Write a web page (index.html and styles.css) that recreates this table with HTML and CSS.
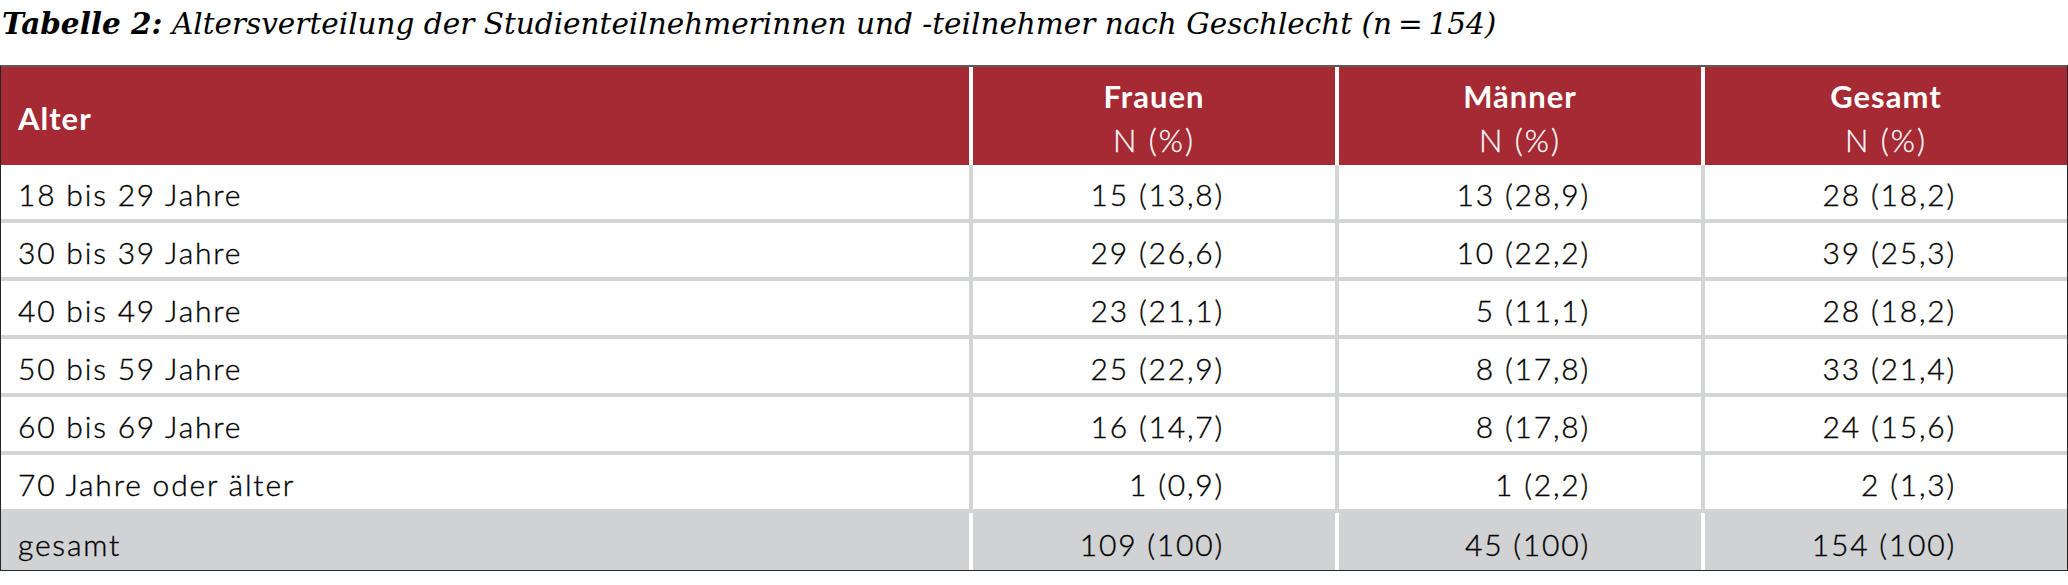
FILE: index.html
```html
<!DOCTYPE html>
<html lang="de">
<head>
<meta charset="utf-8">
<title>Tabelle 2</title>
<link rel="stylesheet" href="styles.css">
</head>
<body>
<h1 class="caption"><strong class="caption-label">Tabelle 2:</strong> <em class="caption-text">Altersverteilung der Studienteilnehmerinnen und -teilnehmer nach Geschlecht (n&#8201;=&#8201;154)</em></h1>
<table class="data">
  <colgroup>
    <col class="col-age">
    <col class="col-num">
    <col class="col-num">
    <col class="col-num">
  </colgroup>
  <thead>
    <tr>
      <th class="head-age">Alter</th>
      <th class="head-num">Frauen<br><span class="unit">N (%)</span></th>
      <th class="head-num">Männer<br><span class="unit">N (%)</span></th>
      <th class="head-num">Gesamt<br><span class="unit">N (%)</span></th>
    </tr>
  </thead>
  <tbody>
    <tr><td class="age">18 bis 29 Jahre</td><td class="num">15 (13,8)</td><td class="num">13 (28,9)</td><td class="num">28 (18,2)</td></tr>
    <tr><td class="age">30 bis 39 Jahre</td><td class="num">29 (26,6)</td><td class="num">10 (22,2)</td><td class="num">39 (25,3)</td></tr>
    <tr><td class="age">40 bis 49 Jahre</td><td class="num">23 (21,1)</td><td class="num">5 (11,1)</td><td class="num">28 (18,2)</td></tr>
    <tr><td class="age">50 bis 59 Jahre</td><td class="num">25 (22,9)</td><td class="num">8 (17,8)</td><td class="num">33 (21,4)</td></tr>
    <tr><td class="age">60 bis 69 Jahre</td><td class="num">16 (14,7)</td><td class="num">8 (17,8)</td><td class="num">24 (15,6)</td></tr>
    <tr><td class="age">70 Jahre oder älter</td><td class="num">1 (0,9)</td><td class="num">1 (2,2)</td><td class="num">2 (1,3)</td></tr>
    <tr class="total"><td class="age">gesamt</td><td class="num">109 (100)</td><td class="num">45 (100)</td><td class="num">154 (100)</td></tr>
  </tbody>
</table>
</body>
</html>
```
FILE: styles.css
```css
html, body {
  margin: 0;
  padding: 0;
  background: #ffffff;
}
body {
  font-family: Lato, "Open Sans", sans-serif;
  color: #000000;
}
.caption {
  box-sizing: border-box;
  height: 65px;
  margin: 0;
  padding: 6px 0 0 2px;
  font-family: "DejaVu Serif", "Liberation Serif", serif;
  font-size: 29.5px;
  line-height: 36px;
  font-weight: normal;
  white-space: nowrap;
}
.caption-label {
  font-weight: bold;
  font-style: italic;
}
.caption-text {
  font-style: italic;
}
.data {
  width: 2068px;
  table-layout: fixed;
  border-collapse: separate;
  border-spacing: 0;
  border: 1px solid #262626;
  border-top: 2px solid #5a5a5a;
}
.col-num {
  width: 366px;
}
.data th {
  height: 98px;
  padding: 4px 0 0 0;
  box-sizing: border-box;
  background: #a52a33;
  color: #ffffff;
  font-size: 31px;
  line-height: 44px;
  font-weight: bold;
  letter-spacing: 1px;
  vertical-align: middle;
}
.head-age {
  text-align: left;
  padding-left: 17px !important;
}
.head-num {
  text-align: center;
  border-left: 4px solid #ffffff;
}
.unit {
  font-weight: 300;
  letter-spacing: 2px;
  -webkit-text-stroke: 0.3px #ffffff;
}
.data td {
  padding: 5px 0 0 0;
  font-size: 30px;
  font-weight: 300;
  line-height: 49px;
  letter-spacing: 1.8px;
  -webkit-text-stroke: 0.35px #000000;
  border-bottom: 4px solid #d3d4d6;
  white-space: nowrap;
}
.data td.age {
  text-align: left;
  padding-left: 17px;
}
.data td.num {
  text-align: right;
  padding-right: 111px;
  border-left: 4px solid #d3d4d6;
}
.total td {
  background: #d1d2d4;
}
.data .total td {
  border-bottom: none;
  padding-top: 5px;
  line-height: 52px;
}
.data .total td.num {
  border-left-color: #ffffff;
}
```
